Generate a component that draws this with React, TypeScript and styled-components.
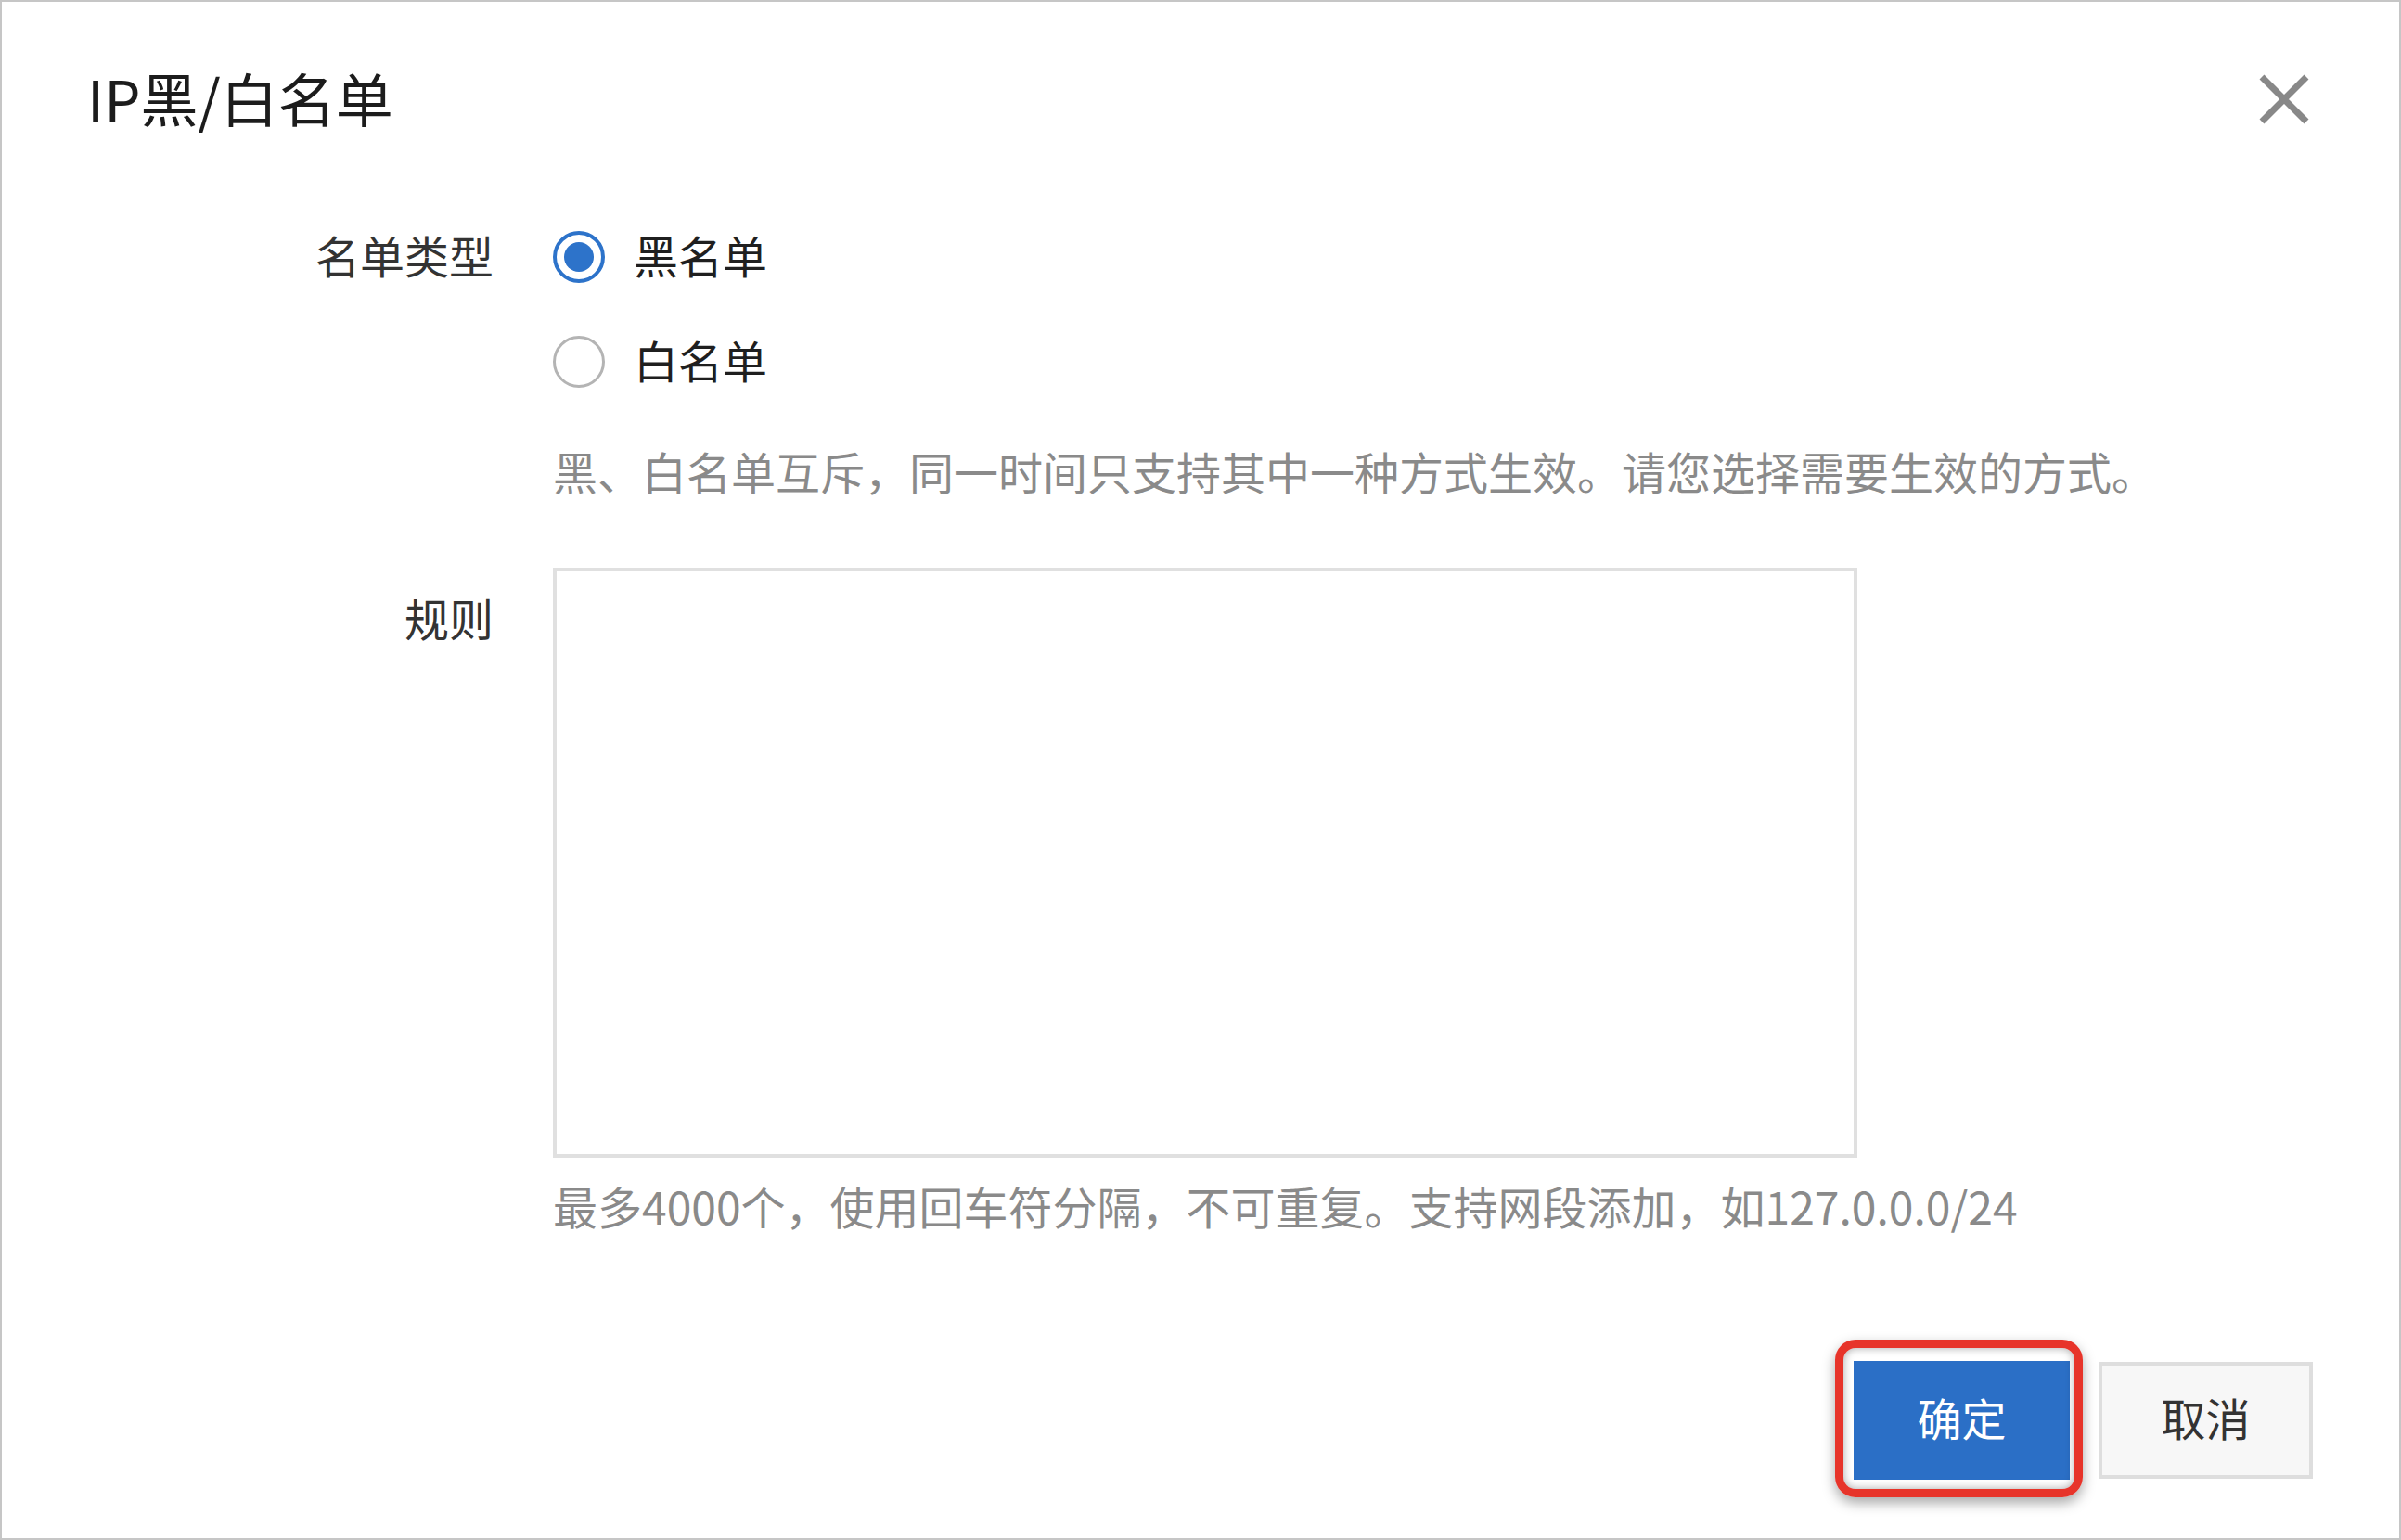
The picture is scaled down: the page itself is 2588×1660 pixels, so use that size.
import React, { useState } from "react";
import styled, { createGlobalStyle } from "styled-components";

const GlobalStyle = createGlobalStyle`
  html, body {
    margin: 0;
    padding: 0;
    background: #ffffff;
  }
  * {
    box-sizing: border-box;
  }
  body {
    font-family: "Noto Sans CJK SC", "Noto Sans", sans-serif;
  }
`;

type ListType = "black" | "white";

const Dialog = styled.div`
  width: 2588px;
  height: 1660px;
  border: 2px solid #c6c6c6;
  background: #ffffff;
  display: flex;
  flex-direction: column;
  font-family: "Noto Sans CJK SC", "Noto Sans", sans-serif;
`;

const Header = styled.div`
  height: 210px;
  display: flex;
  align-items: center;
  justify-content: space-between;
  padding: 0 96px 0 92px;
`;

const Title = styled.h1`
  margin: 0 0 4px;
  font-size: 62px;
  line-height: 80px;
  font-weight: 400;
  color: #1c1c1c;
`;

const CloseButton = styled.button`
  width: 56px;
  height: 56px;
  padding: 0;
  border: none;
  background: transparent;
  cursor: pointer;
  display: flex;
  align-items: center;
  justify-content: center;
`;

const Body = styled.div`
  padding-top: 31px;
  display: flex;
  flex-direction: column;
`;

const FormItem = styled.div<{ $gapTop?: number }>`
  display: grid;
  grid-template-columns: 530px 1fr;
  column-gap: 64px;
  margin-top: ${(p) => p.$gapTop ?? 0}px;
`;

const Label = styled.div<{ $offset?: number }>`
  text-align: right;
  font-size: 48px;
  line-height: 62px;
  color: #333333;
  padding-top: ${(p) => p.$offset ?? 0}px;
`;

const Control = styled.div`
  display: flex;
  flex-direction: column;
  align-items: flex-start;
`;

const RadioGroup = styled.div`
  display: flex;
  flex-direction: column;
  gap: 45px;
`;

const RadioOption = styled.button`
  display: flex;
  align-items: center;
  gap: 31px;
  height: 68px;
  padding: 0;
  border: none;
  background: transparent;
  cursor: pointer;
  font-family: inherit;
  font-size: 48px;
  color: #1f1f1f;
`;

const RadioText = styled.span`
  line-height: 62px;
  padding-bottom: 6px;
`;

const RadioCircle = styled.span<{ $checked: boolean }>`
  width: 56px;
  height: 56px;
  border-radius: 50%;
  border: ${(p) => (p.$checked ? "4px solid #2d73ca" : "3px solid #b4b4b4")};
  background: #ffffff;
  display: flex;
  align-items: center;
  justify-content: center;

  &::after {
    content: "";
    width: 32px;
    height: 32px;
    border-radius: 50%;
    background: #2d73ca;
    display: ${(p) => (p.$checked ? "block" : "none")};
  }
`;

const Hint = styled.p<{ $gapTop: number }>`
  margin: ${(p) => p.$gapTop}px 0 0;
  font-size: 48px;
  line-height: 62px;
  padding-bottom: 6px;
  color: #8a8a8a;
  white-space: nowrap;
`;

const RuleInput = styled.textarea`
  width: 1406px;
  height: 636px;
  border: 4px solid #e0e0e0;
  background: #ffffff;
  resize: none;
  outline: none;
  padding: 16px 20px;
  font-family: inherit;
  font-size: 44px;
  color: #333333;
`;

const Footer = styled.div`
  margin-top: 131px;
  display: flex;
  justify-content: flex-end;
  gap: 31px;
  padding-right: 93px;
`;

const Highlight = styled.div`
  position: relative;
  display: flex;

  &::before {
    content: "";
    position: absolute;
    left: -20px;
    right: -14px;
    top: -23px;
    bottom: -19px;
    border: 9px solid #e7342a;
    border-radius: 22px;
    box-shadow: 0 6px 14px rgba(0, 0, 0, 0.35),
      inset 0 0 10px rgba(0, 0, 0, 0.35);
    pointer-events: none;
  }
`;

const ActionButton = styled.button<{ $primary?: boolean }>`
  width: ${(p) => (p.$primary ? 233 : 231)}px;
  height: ${(p) => (p.$primary ? 128 : 126)}px;
  margin-top: ${(p) => (p.$primary ? 0 : 1)}px;
  border: ${(p) => (p.$primary ? "none" : "4px solid #dedede")};
  background: ${(p) => (p.$primary ? "#2b6fc6" : "#f7f7f7")};
  color: ${(p) => (p.$primary ? "#ffffff" : "#333333")};
  font-family: inherit;
  font-size: 48px;
  cursor: pointer;
  display: flex;
  align-items: center;
  justify-content: center;
  padding: 0 0 8px;
`;

const CloseIcon = () => (
  <svg width="56" height="56" viewBox="0 0 56 56">
    <path
      d="M4 4 L52 52 M52 4 L4 52"
      stroke="#888888"
      strokeWidth="7"
      strokeLinecap="butt"
      fill="none"
    />
  </svg>
);

const options: { value: ListType; label: string }[] = [
  { value: "black", label: "黑名单" },
  { value: "white", label: "白名单" },
];

export default function App() {
  const [type, setType] = useState<ListType>("black");
  const [rules, setRules] = useState("");

  return (
    <>
      <GlobalStyle />
      <Dialog>
        <Header>
          <Title>IP黑/白名单</Title>
          <CloseButton aria-label="关闭">
            <CloseIcon />
          </CloseButton>
        </Header>

        <Body>
          <FormItem>
            <Label>名单类型</Label>
            <Control>
              <RadioGroup role="radiogroup">
                {options.map((o) => (
                  <RadioOption
                    key={o.value}
                    role="radio"
                    aria-checked={type === o.value}
                    onClick={() => setType(o.value)}
                  >
                    <RadioCircle $checked={type === o.value} />
                    <RadioText>{o.label}</RadioText>
                  </RadioOption>
                ))}
              </RadioGroup>
              <Hint $gapTop={52}>
                黑、白名单互斥，同一时间只支持其中一种方式生效。请您选择需要生效的方式。
              </Hint>
            </Control>
          </FormItem>

          <FormItem $gapTop={68}>
            <Label $offset={22}>规则</Label>
            <Control>
              <RuleInput
                value={rules}
                onChange={(e) => setRules(e.target.value)}
              />
              <Hint $gapTop={20}>
                最多4000个，使用回车符分隔，不可重复。支持网段添加，如127.0.0.0/24
              </Hint>
            </Control>
          </FormItem>
        </Body>

        <Footer>
          <Highlight>
            <ActionButton $primary>确定</ActionButton>
          </Highlight>
          <ActionButton>取消</ActionButton>
        </Footer>
      </Dialog>
    </>
  );
}
